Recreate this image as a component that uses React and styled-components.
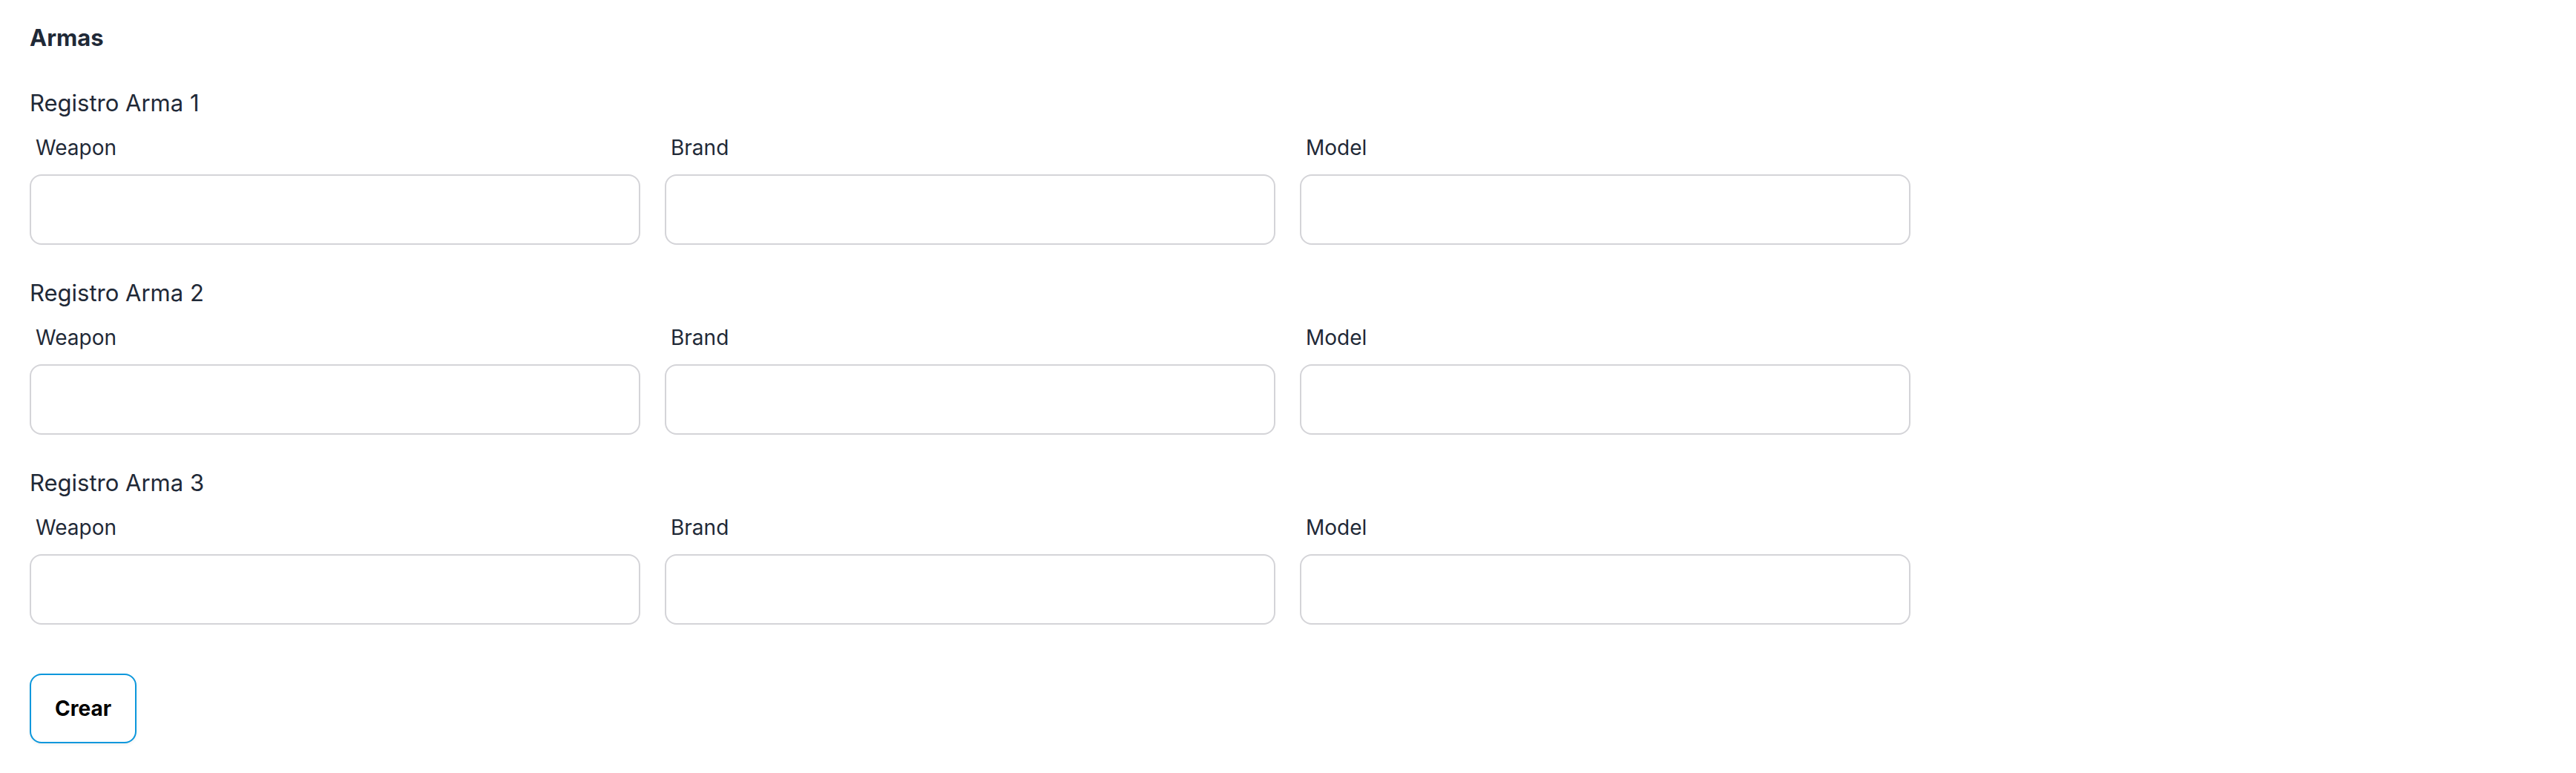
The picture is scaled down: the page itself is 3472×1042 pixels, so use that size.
import React from "react";
import styled, { createGlobalStyle } from "styled-components";

const GlobalStyle = createGlobalStyle`
  html, body {
    margin: 0;
    padding: 0;
    background: #ffffff;
  }
  body {
    font-family: Inter, "Noto Sans", "Liberation Sans", sans-serif;
    color: #1f2937;
  }
  * { box-sizing: border-box; }
`;

const Page = styled.div`
  padding: 27px 40px 40px 40px;
`;

const Form = styled.form`
  display: flex;
  flex-direction: column;
  width: 2535px;
`;

const Title = styled.h2`
  margin: 0 0 40px 0;
  font-size: 31px;
  line-height: 48px;
  font-weight: 700;
  color: #1f2937;
`;

const Section = styled.section`
  display: flex;
  flex-direction: column;
  margin-bottom: ${(p) => (p.$last ? "66px" : "41px")};
`;

const SectionTitle = styled.h3`
  margin: 0 0 16px 0;
  font-size: 31px;
  line-height: 48px;
  font-weight: 400;
  color: #1f2937;
`;

const FieldGrid = styled.div`
  display: grid;
  grid-template-columns: repeat(3, 1fr);
  column-gap: 33px;
`;

const Field = styled.div`
  display: flex;
  flex-direction: column;
  gap: 16px;
`;

const Label = styled.label`
  padding-left: 8px;
  font-size: 28px;
  line-height: 40px;
  font-weight: 400;
  color: #1f2937;
`;

const Input = styled.input`
  width: 100%;
  height: 95px;
  border: 2px solid #d4d4d8;
  border-radius: 16px;
  background: #ffffff;
  padding: 0 24px;
  font-family: inherit;
  font-size: 28px;
  outline: none;
`;

const SubmitButton = styled.button`
  align-self: flex-start;
  height: 94px;
  padding: 0 32px;
  border: 2px solid #0b97dc;
  border-radius: 16px;
  background: #ffffff;
  box-shadow: 0 2px 4px rgba(0, 0, 0, 0.06);
  font-family: inherit;
  font-size: 28px;
  font-weight: 700;
  color: #000000;
  cursor: pointer;
`;

const fields = ["Weapon", "Brand", "Model"];

export default function App() {
  return (
    <>
      <GlobalStyle />
      <Page>
        <Form onSubmit={(e) => e.preventDefault()}>
          <Title>Armas</Title>
          {[1, 2, 3].map((n) => (
            <Section key={n} $last={n === 3}>
              <SectionTitle>Registro Arma {n}</SectionTitle>
              <FieldGrid>
                {fields.map((f) => (
                  <Field key={f}>
                    <Label htmlFor={`${f}-${n}`}>{f}</Label>
                    <Input id={`${f}-${n}`} type="text" />
                  </Field>
                ))}
              </FieldGrid>
            </Section>
          ))}
          <SubmitButton type="submit">Crear</SubmitButton>
        </Form>
      </Page>
    </>
  );
}
